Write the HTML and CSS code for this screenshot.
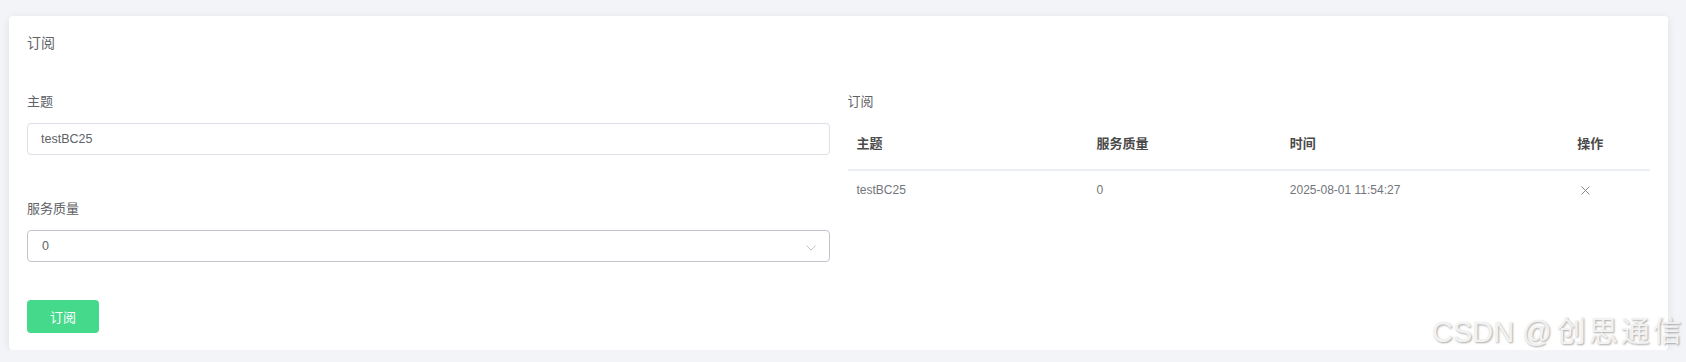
FILE: index.html
```html
<!DOCTYPE html>
<html lang="zh-CN">
<head>
  <meta charset="UTF-8">
  <meta name="viewport" content="width=device-width, initial-scale=1.0">
  <link rel="stylesheet" href="styles.css">
</head>
<body>

  <div class="page">
    <div class="card">
      <div class="card-title">订阅</div>

      <div class="card-body">
        <!-- left: subscribe form -->
        <div class="form">
          <div class="form-item">
            <div class="form-label">主题</div>
            <div class="input">testBC25</div>
          </div>
          <div class="form-item">
            <div class="form-label">服务质量</div>
            <div class="select">
              <span>0</span>
              <svg class="chevron" width="10" height="6" viewBox="0 0 10 6">
                <polyline points="0.5,0.5 5,5 9.5,0.5" fill="none" stroke="#c0c4cc" stroke-width="1"/>
              </svg>
            </div>
          </div>
          <button class="btn">订阅</button>
        </div>

        <!-- right: subscription list -->
        <div class="list">
          <div class="list-label">订阅</div>
          <table class="sub-table">
            <colgroup>
              <col class="col-topic">
              <col class="col-qos">
              <col class="col-time">
              <col class="col-op">
            </colgroup>
            <tr>
              <th>主题</th>
              <th>服务质量</th>
              <th>时间</th>
              <th>操作</th>
            </tr>
            <tr>
              <td>testBC25</td>
              <td>0</td>
              <td>2025-08-01 11:54:27</td>
              <td>
                <svg class="close" width="9" height="9" viewBox="0 0 9 9">
                  <path d="M0.5 0.5 L8.5 8.5 M8.5 0.5 L0.5 8.5" stroke="#7c7f86" stroke-width="0.9"/>
                </svg>
              </td>
            </tr>
          </table>
        </div>
      </div>
    </div>
  </div>

  <div class="watermark">CSDN @<span class="wm-cjk">创思通信</span></div>

</body>
</html>
```

FILE: styles.css
```css
html, body {
  margin: 0;
  padding: 0;
  overflow: hidden;
}

body {
  background-color: #f3f4f8;
  font-family: "Liberation Sans", "Noto Sans CJK SC", sans-serif;
  font-size: 13px;
  color: #606266;
}

.page {
  padding: 16px 18px 0 9px;
}

.card {
  background-color: #fff;
  border-radius: 4px;
  box-shadow: 0 2px 10px rgba(0, 0, 0, 0.08);
  padding: 17px 18px 17px 18px;
}

.card-title {
  font-size: 14px;
  line-height: 20px;
}

.card-body {
  display: grid;
  grid-template-columns: 1fr 1fr;
  gap: 18px;
  margin-top: 39px;
}

.form-label {
  line-height: 20px;
  margin-bottom: 11px;
}

.list-label {
  line-height: 20px;
}

.form-item + .form-item {
  margin-top: 44px;
}

.input, .select {
  box-sizing: border-box;
  height: 32px;
  border: 1px solid #dcdfe6;
  border-radius: 4px;
  padding: 0 13px;
  display: flex;
  align-items: center;
  font-size: 12.5px;
}

.select {
  border-color: #c0c4cc;
  justify-content: space-between;
  padding-left: 14px;
}

.chevron {
  margin-top: 3px;
}

.btn {
  margin-top: 38px;
  width: 72px;
  height: 33px;
  border: 0;
  border-radius: 4px;
  background-color: #45d98b;
  color: #fff;
  font-family: inherit;
  font-size: 13px;
  padding: 0;
}

.sub-table {
  width: 100%;
  border-collapse: collapse;
  table-layout: fixed;
  margin-top: 6px;
}

.col-topic { width: 29.9%; }
.col-qos { width: 24.1%; }
.col-time { width: 35.8%; }
.col-op { width: 10.2%; }

.sub-table th {
  text-align: left;
  font-weight: bold;
  color: #4a4a4a;
  line-height: 20px;
  padding: 16px 9px 15px;
  border-bottom: 2px solid #ebeef5;
}

.sub-table td {
  text-align: left;
  font-size: 12px;
  line-height: 20px;
  padding: 9px 9px;
  color: #72757b;
}

.close {
  margin-left: 4px;
  vertical-align: -1px;
}

.watermark {
  position: absolute;
  left: 1432px;
  top: 318px;
  font-size: 29px;
  line-height: 29px;
  white-space: nowrap;
  color: #f2f2f2;
  text-shadow: 1px 1px 2px rgba(0, 0, 0, 0.35);
}

.wm-cjk {
  margin-left: 5px;
  letter-spacing: 3px;
}
```
